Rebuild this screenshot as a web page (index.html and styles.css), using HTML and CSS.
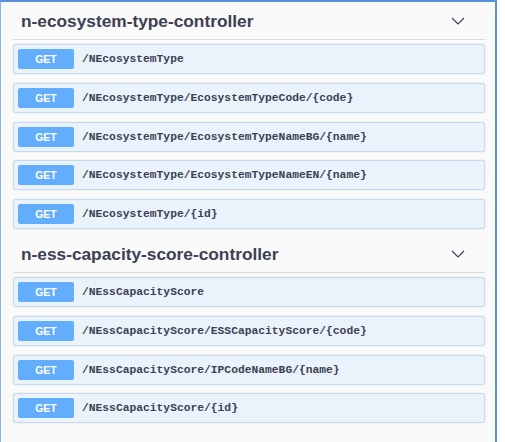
FILE: index.html
```html
<!DOCTYPE html>
<html>
<head>
<meta charset="utf-8">
<link rel="stylesheet" href="styles.css">
</head>
<body>
<div class="frame">
  <section class="tag">
    <div class="tag-head">
      <h3 class="tag-title">n-ecosystem-type-controller</h3>
      <svg class="chev" width="14" height="8" viewBox="0 0 14 8"><path d="M1 1 L7 7 L13 1" fill="none" stroke="#3b4151" stroke-width="1.2"/></svg>
    </div>
    <div class="ops">
      <div class="op"><span class="method">GET</span><span class="path">/NEcosystemType</span></div>
      <div class="op"><span class="method">GET</span><span class="path">/NEcosystemType/EcosystemTypeCode/{code}</span></div>
      <div class="op"><span class="method">GET</span><span class="path">/NEcosystemType/EcosystemTypeNameBG/{name}</span></div>
      <div class="op"><span class="method">GET</span><span class="path">/NEcosystemType/EcosystemTypeNameEN/{name}</span></div>
      <div class="op"><span class="method">GET</span><span class="path">/NEcosystemType/{id}</span></div>
    </div>
  </section>
  <section class="tag">
    <div class="tag-head">
      <h3 class="tag-title">n-ess-capacity-score-controller</h3>
      <svg class="chev" width="14" height="8" viewBox="0 0 14 8"><path d="M1 1 L7 7 L13 1" fill="none" stroke="#3b4151" stroke-width="1.2"/></svg>
    </div>
    <div class="ops">
      <div class="op"><span class="method">GET</span><span class="path">/NEssCapacityScore</span></div>
      <div class="op"><span class="method">GET</span><span class="path">/NEssCapacityScore/ESSCapacityScore/{code}</span></div>
      <div class="op"><span class="method">GET</span><span class="path">/NEssCapacityScore/IPCodeNameBG/{name}</span></div>
      <div class="op"><span class="method">GET</span><span class="path">/NEssCapacityScore/{id}</span></div>
    </div>
  </section>
</div>
</body>
</html>
```

FILE: styles.css
```css
html, body {
  margin: 0;
  padding: 0;
  background: #ffffff;
}
body {
  font-family: "Liberation Sans", Arial, sans-serif;
  color: #3b4151;
}
.frame {
  width: 472px;
  height: 440px;
  border-top: 2px solid #5b8fd6;
  border-left: 1px solid #8fb2e3;
  border-right: 2px solid #5b8fd6;
  background: #fafafa;
  padding: 0 10px 0 12px;
  box-sizing: content-box;
}
.tag {
  display: flex;
  flex-direction: column;
}
.tag + .tag {
  margin-top: 6px;
}
.tag-head {
  height: 37px;
  box-sizing: content-box;
  border-bottom: 1px solid #d8dadd;
  display: flex;
  align-items: center;
  justify-content: space-between;
  padding: 0 20px 0 8px;
}
.tag-title {
  margin: 2px 0 0 0;
  font-size: 17.3px;
  font-weight: bold;
  color: #3b4151;
}
.chev {
  display: block;
  margin-top: 0;
}
.ops {
  display: flex;
  flex-direction: column;
  gap: 8.75px;
  padding-top: 4px;
}
.op {
  height: 30px;
  box-sizing: border-box;
  border: 1px solid #c6d9ed;
  border-radius: 3px;
  background: #eaf3fc;
  box-shadow: 0 0 2px rgba(0, 0, 0, 0.12);
  display: flex;
  align-items: center;
  padding-left: 4px;
}
.method {
  width: 56px;
  height: 20px;
  border-radius: 2px;
  background: #63aefc;
  color: #ffffff;
  font-size: 10.5px;
  font-weight: bold;
  display: flex;
  align-items: center;
  justify-content: center;
}
.path {
  margin-left: 8px;
  font-family: "Liberation Mono", "Courier New", monospace;
  font-size: 11.3px;
  font-weight: bold;
  color: #3b4151;
}
```
